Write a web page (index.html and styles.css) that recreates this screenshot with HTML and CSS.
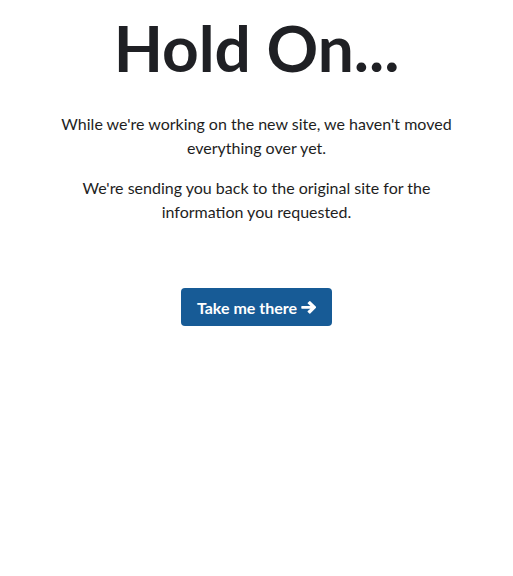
FILE: index.html
```html
<!DOCTYPE html>
<html>
<head>
<meta charset="utf-8">
<link rel="stylesheet" href="styles.css">
</head>
<body>
<main class="page">
  <h1 class="title">Hold On...</h1>
  <div class="message">
    <p>While we're working on the new site, we haven't moved everything over yet.</p>
    <p>We're sending you back to the original site for the information you requested.</p>
  </div>
  <a class="button" href="#">Take me there <svg class="arrow" viewBox="0 0 16 16" width="15" height="15"><path fill="#fff" d="M7.2 1.2 L8.9 -0.4 Q9.4 -0.8 9.9 -0.4 L16 5.7 Q16.5 6.2 16 6.7 L9.9 12.8 Q9.4 13.3 8.9 12.8 L7.2 11.2 Q6.7 10.7 7.2 10.2 L10 7.6 H1 Q0.3 7.6 0.3 6.9 V5.5 Q0.3 4.8 1 4.8 H10 L7.2 2.2 Q6.7 1.7 7.2 1.2 Z" transform="translate(0 1.6)"/></svg></a>
</main>
</body>
</html>
```
FILE: styles.css
```css
html, body {
  margin: 0;
  padding: 0;
  background: #fff;
}
body {
  font-family: Lato, "Open Sans", sans-serif;
  color: #1e1e1e;
}
.page {
  display: flex;
  flex-direction: column;
  align-items: center;
  text-align: center;
  padding-top: 8px;
}
.title {
  margin: 0;
  font-size: 64px;
  font-weight: 700;
  line-height: 80px;
  color: #1f2024;
}
.message {
  width: 420px;
  margin-top: 24px;
  font-size: 16px;
  line-height: 24px;
}
.message p {
  margin: 0 0 16px;
}
.button {
  margin-top: 48px;
  display: inline-flex;
  align-items: center;
  gap: 4px;
  height: 38px;
  padding: 0 16px;
  box-sizing: border-box;
  background: #175b96;
  color: #fff;
  font-size: 16px;
  font-weight: 700;
  text-decoration: none;
  border-radius: 4px;
}
.arrow {
  display: block;
}
```
